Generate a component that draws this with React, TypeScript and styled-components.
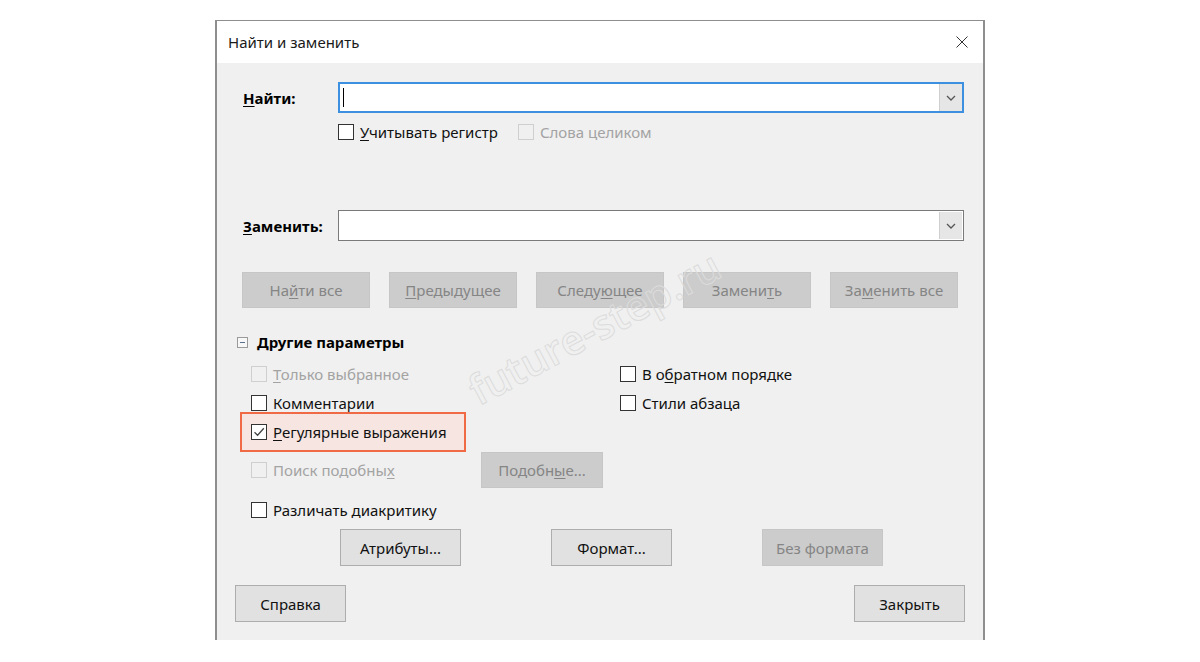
import React from "react";
import styled, { createGlobalStyle } from "styled-components";

const Global = createGlobalStyle`
  html, body {
    margin: 0;
    padding: 0;
    background: #ffffff;
  }
  body {
    font-family: "Segoe UI", "Noto Sans", "Open Sans", sans-serif;
    color: #000;
  }
`;

const Page = styled.div`
  width: 1200px;
  height: 662px;
  display: flex;
  justify-content: center;
  padding-top: 20px;
  box-sizing: border-box;
  overflow: hidden;
`;

const Dialog = styled.div`
  position: relative;
  width: 770px;
  height: 620px;
  box-sizing: border-box;
  border: 2px solid #8e8e8e;
  border-top-width: 1px;
  border-bottom: none;
  background: #f0f0f0;
  display: flex;
  flex-direction: column;
  overflow: hidden;
`;

const TitleBar = styled.div`
  height: 42px;
  flex-shrink: 0;
  background: #ffffff;
  display: flex;
  align-items: center;
  justify-content: space-between;
  padding: 0 14px 0 11px;
  font-size: 15px;
  color: #1a1a1a;
`;

const CloseBtn = styled.div`
  width: 14px;
  height: 14px;
  display: flex;
  align-items: center;
  justify-content: center;
`;

const Body = styled.div`
  flex: 1;
  display: flex;
  flex-direction: column;
  padding: 0 19px 0 26px;
  font-size: 15px;
`;

const FieldRow = styled.div<{ $top: number }>`
  display: flex;
  align-items: center;
  height: 31px;
  margin-top: ${({ $top }) => $top}px;
`;

const FieldLabel = styled.div`
  width: 95px;
  font-weight: 700;
  font-size: 15px;
  flex-shrink: 0;
`;

const Combo = styled.div<{ $focused?: boolean }>`
  flex: 1;
  height: 31px;
  box-sizing: border-box;
  background: #ffffff;
  border: ${({ $focused }) => ($focused ? "2px solid #3d8fe0" : "1px solid #7a7a7a")};
  display: flex;
  align-items: stretch;
  padding: ${({ $focused }) => ($focused ? "0" : "1px")};
`;

const ComboText = styled.div`
  flex: 1;
  display: flex;
  align-items: center;
  padding-left: 3px;
`;

const Caret = styled.div`
  width: 1px;
  height: 19px;
  background: #000;
`;

const ComboArrow = styled.div`
  width: 22px;
  background: #e6e6e6;
  border-left: 1px solid #cfcfcf;
  display: flex;
  align-items: center;
  justify-content: center;
`;

const U = styled.span`
  text-decoration: underline;
  text-underline-offset: 2px;
`;

const CheckLine = styled.div<{ $indent?: number; $top?: number }>`
  display: flex;
  align-items: center;
  gap: 20px;
  height: 20px;
  margin-left: ${({ $indent }) => $indent ?? 0}px;
  margin-top: ${({ $top }) => $top ?? 0}px;
`;

const Check = styled.label<{ $disabled?: boolean }>`
  display: inline-flex;
  align-items: center;
  gap: 6px;
  color: ${({ $disabled }) => ($disabled ? "#a3a3a3" : "#111")};
  white-space: nowrap;
`;

const Box = styled.span<{ $disabled?: boolean }>`
  width: 16px;
  height: 16px;
  box-sizing: border-box;
  border: 1px solid ${({ $disabled }) => ($disabled ? "#cfcfcf" : "#333")};
  background: ${({ $disabled }) => ($disabled ? "#f0f0f0" : "#ffffff")};
  display: inline-flex;
  align-items: center;
  justify-content: center;
  flex-shrink: 0;
`;

const ButtonRow = styled.div<{ $top: number; $gap: number; $indent: number }>`
  display: flex;
  gap: ${({ $gap }) => $gap}px;
  margin-top: ${({ $top }) => $top}px;
  margin-left: ${({ $indent }) => $indent}px;
`;

const Btn = styled.div<{ $disabled?: boolean; $w: number; $h?: number }>`
  width: ${({ $w }) => $w}px;
  height: ${({ $h }) => $h ?? 36}px;
  box-sizing: border-box;
  display: flex;
  align-items: center;
  justify-content: center;
  background: ${({ $disabled }) => ($disabled ? "#cccccc" : "#e1e1e1")};
  border: 1px solid ${({ $disabled }) => ($disabled ? "#c6c6c6" : "#adadad")};
  color: ${({ $disabled }) => ($disabled ? "#858585" : "#111")};
  font-size: 15px;
  flex-shrink: 0;
`;

const BottomRow = styled.div`
  display: flex;
  justify-content: space-between;
  margin-top: 19px;
  margin-left: -8px;
  margin-right: -1px;
`;

const SectionHead = styled.div`
  display: flex;
  align-items: center;
  gap: 9px;
  height: 20px;
  margin-top: 24px;
  margin-left: -6px;
  font-weight: 700;
  font-size: 15px;
`;

const Expander = styled.span`
  width: 11px;
  height: 11px;
  box-sizing: border-box;
  border: 1px solid #9a9a9a;
  background: #f7f7f7;
  display: inline-flex;
  align-items: center;
  justify-content: center;
  &::after {
    content: "";
    width: 5px;
    height: 1px;
    background: #5a6f8c;
  }
`;

const Options = styled.div`
  display: flex;
  flex-direction: column;
  margin-left: 8px;
  margin-top: 7px;
`;

const OptRow = styled.div<{ $h: number; $top?: number }>`
  display: grid;
  grid-template-columns: 230px 139px 1fr;
  align-items: center;
  height: ${({ $h }) => $h}px;
  margin-top: ${({ $top }) => $top ?? 0}px;
`;

const Highlight = styled.div`
  justify-self: start;
  display: flex;
  align-items: center;
  margin: -6px 0 -6px -11px;
  padding: 8px 17px 8px 9px;
  border: 2px solid #f06a45;
  background: #f6e5e1;
`;

const Watermark = styled.div`
  position: absolute;
  left: 238px;
  top: 278px;
  transform: rotate(-28deg);
  transform-origin: center;
  font-family: "Open Sans", "Noto Sans", sans-serif;
  font-size: 41px;
  font-weight: 600;
  color: transparent;
  -webkit-text-stroke: 1px #dcdcdc;
  pointer-events: none;
  white-space: nowrap;
`;

function Tick() {
  return (
    <svg width="12" height="12" viewBox="0 0 12 12">
      <path d="M1.5 6.2 L4.6 9.3 L10.8 2.2" fill="none" stroke="#444" strokeWidth="1.3" />
    </svg>
  );
}

function CheckBox({
  label,
  disabled,
  checked,
}: {
  label: React.ReactNode;
  disabled?: boolean;
  checked?: boolean;
}) {
  return (
    <Check $disabled={disabled}>
      <Box $disabled={disabled}>{checked && <Tick />}</Box>
      {label}
    </Check>
  );
}

function Chevron() {
  return (
    <svg width="10" height="6" viewBox="0 0 10 6">
      <path d="M1 1 L5 5 L9 1" fill="none" stroke="#555" strokeWidth="1.3" />
    </svg>
  );
}

export default function App() {
  return (
    <>
      <Global />
      <Page>
        <Dialog>
          <TitleBar>
            <span>Найти и заменить</span>
            <CloseBtn>
              <svg width="12" height="12" viewBox="0 0 12 12">
                <path d="M0.5 0.5 L11.5 11.5 M11.5 0.5 L0.5 11.5" stroke="#333" strokeWidth="1" />
              </svg>
            </CloseBtn>
          </TitleBar>
          <Body>
            <FieldRow $top={19}>
              <FieldLabel>
                <U>Н</U>айти:
              </FieldLabel>
              <Combo $focused>
                <ComboText>
                  <Caret />
                </ComboText>
                <ComboArrow>
                  <Chevron />
                </ComboArrow>
              </Combo>
            </FieldRow>
            <CheckLine $indent={95} $top={9}>
              <CheckBox
                label={
                  <span>
                    <U>У</U>читывать регистр
                  </span>
                }
              />
              <CheckBox label="Слова целиком" disabled />
            </CheckLine>

            <FieldRow $top={68}>
              <FieldLabel>
                <U>З</U>аменить:
              </FieldLabel>
              <Combo>
                <ComboText />
                <ComboArrow>
                  <Chevron />
                </ComboArrow>
              </Combo>
            </FieldRow>

            <ButtonRow $top={31} $gap={19} $indent={-1}>
              <Btn $disabled $w={128}>
                <span>
                  На<U>й</U>ти все
                </span>
              </Btn>
              <Btn $disabled $w={128}>
                <span>
                  <U>П</U>редыдущее
                </span>
              </Btn>
              <Btn $disabled $w={128}>
                <span>
                  Следу<U>ю</U>щее
                </span>
              </Btn>
              <Btn $disabled $w={128}>
                <span>
                  Замени<U>т</U>ь
                </span>
              </Btn>
              <Btn $disabled $w={128}>
                <span>
                  За<U>м</U>енить все
                </span>
              </Btn>
            </ButtonRow>

            <SectionHead>
              <Expander />
              <span>Другие параметры</span>
            </SectionHead>

            <Options>
              <OptRow $h={29}>
                <CheckBox
                  disabled
                  label={
                    <span>
                      <U>Т</U>олько выбранное
                    </span>
                  }
                />
                <span />
                <CheckBox
                  label={
                    <span>
                      В о<U>б</U>ратном порядке
                    </span>
                  }
                />
              </OptRow>
              <OptRow $h={29}>
                <CheckBox label="Комментарии" />
                <span />
                <CheckBox label="Стили абзаца" />
              </OptRow>
              <OptRow $h={29}>
                <Highlight>
                  <CheckBox
                    checked
                    label={
                      <span>
                        <U>Р</U>егулярные выражения
                      </span>
                    }
                  />
                </Highlight>
              </OptRow>
              <OptRow $h={36} $top={6}>
                <CheckBox
                  disabled
                  label={
                    <span>
                      Поиск подобны<U>х</U>
                    </span>
                  }
                />
                <Btn $disabled $w={122}>
                  <span>
                    Подобн<U>ы</U>е...
                  </span>
                </Btn>
              </OptRow>
              <OptRow $h={29} $top={7}>
                <CheckBox label="Различать диакритику" />
              </OptRow>
            </Options>

            <ButtonRow $top={5} $gap={90} $indent={97}>
              <Btn $w={121} $h={37}>
                Атрибуты...
              </Btn>
              <Btn $w={121} $h={37}>
                Формат...
              </Btn>
              <Btn $disabled $w={121} $h={37}>
                Без формата
              </Btn>
            </ButtonRow>

            <BottomRow>
              <Btn $w={111} $h={37}>
                Справка
              </Btn>
              <Btn $w={111} $h={37}>
                Закрыть
              </Btn>
            </BottomRow>
          </Body>
          <Watermark>future-step.ru</Watermark>
        </Dialog>
      </Page>
    </>
  );
}
